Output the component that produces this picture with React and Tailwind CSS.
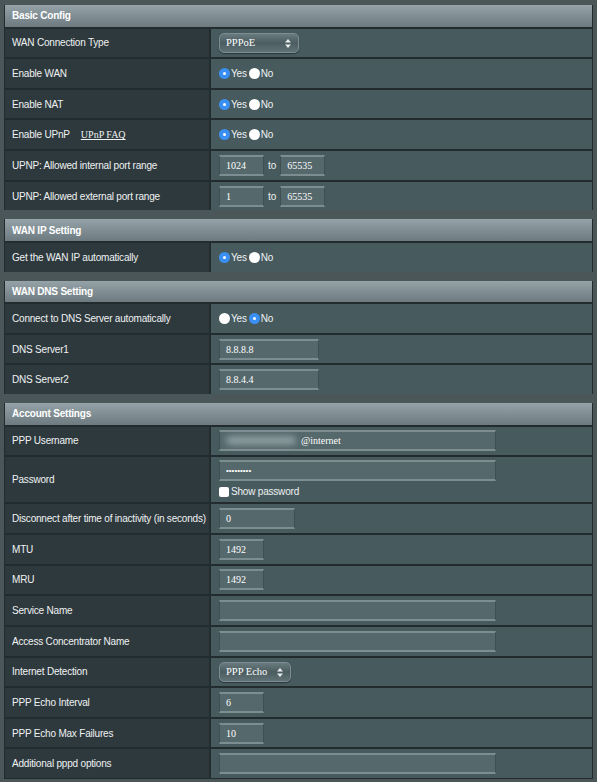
import React from 'react';

const sans = { fontFamily: '"Liberation Sans", Arial, sans-serif' };
const serif = { fontFamily: '"Liberation Serif", "Times New Roman", serif' };

const Radio = ({ checked }) =>
  checked ? (
    <span className="inline-flex w-[11px] h-[11px] rounded-full bg-[#3a8ff2] items-center justify-center">
      <span className="w-[3px] h-[3px] rounded-full bg-white" />
    </span>
  ) : (
    <span className="inline-block w-[11px] h-[11px] rounded-full bg-white" />
  );

const YesNo = ({ yes = true }) => (
  <div className="flex items-center text-[10px] tracking-[-0.2px] text-[#eef2f3]" style={sans}>
    <Radio checked={yes} />
    <span className="ml-[1px] mr-[2px]">Yes</span>
    <Radio checked={!yes} />
    <span className="ml-[1px]">No</span>
  </div>
);

const Select = ({ value, width }) => (
  <div
    className="relative flex items-center h-[20px] rounded-[5px] border border-[#7c8c90] bg-gradient-to-b from-[#6a7b7f] via-[#4c5d61] to-[#617276] shadow-[0_1px_1px_rgba(0,0,0,0.4)] pl-[6px]"
    style={{ width }}
  >
    <span className="text-[10.5px] text-white" style={serif}>{value}</span>
    <svg className="absolute right-[7px] top-[5px]" width="6" height="9" viewBox="0 0 6 9">
      <path d="M3 0 L6 3.5 H0 Z" fill="#e8eef0" />
      <path d="M3 9 L6 5.5 H0 Z" fill="#e8eef0" />
    </svg>
  </div>
);

const Input = ({ value = '', width, children }) => (
  <div
    className="flex items-center h-[21px] bg-[#55686c] border-t-2 border-b-2 border-t-[#7d8e92] border-b-[#7d8e92] border-x border-x-[#3f5054] pl-[6px] text-[10px] text-white"
    style={{ width, ...serif }}
  >
    {children || value}
  </div>
);

const Row = ({ label, children, tall }) => (
  <div className={`flex border-t-2 border-[#222b2e] ${tall ? 'h-[47px]' : 'h-[30.67px]'}`}>
    <div
      className="w-[206px] shrink-0 bg-[#2e393d] border-r-2 border-[#222b2e] flex items-center pl-[7px] text-[10px] tracking-[-0.2px] text-[#eef2f3] whitespace-nowrap"
      style={sans}
    >
      {label}
    </div>
    <div className="flex-1 bg-[#475a5e] flex items-center pl-[8px]">{children}</div>
  </div>
);

const Section = ({ title, children }) => (
  <div className="border-x border-[#222b2e] mx-[4px]">
    <div
      className="h-[21.5px] bg-gradient-to-b from-[#95a3a8] to-[#6d7b80] flex items-center pl-[7px] text-[10px] tracking-[-0.2px] font-bold text-white"
      style={sans}
    >
      {title}
    </div>
    {children}
  </div>
);

export default function App() {
  return (
    <div className="w-[597px] h-[782px] bg-[#4b5659] pt-[5px] flex flex-col gap-[9px] overflow-hidden">
      <Section title="Basic Config">
        <Row label="WAN Connection Type">
          <Select value="PPPoE" width="80px" />
        </Row>
        <Row label="Enable WAN"><YesNo /></Row>
        <Row label="Enable NAT"><YesNo /></Row>
        <Row
          label={
            <span className="flex items-center">
              Enable UPnP
              <span className="ml-[11px] underline text-[10px] tracking-normal" style={serif}>UPnP FAQ</span>
            </span>
          }
        >
          <YesNo />
        </Row>
        <Row label="UPNP: Allowed internal port range">
          <div className="flex items-center">
            <Input value="1024" width="45px" />
            <span className="mx-[4px] text-[10px] text-[#eef2f3]" style={sans}>to</span>
            <Input value="65535" width="45px" />
          </div>
        </Row>
        <Row label="UPNP: Allowed external port range">
          <div className="flex items-center">
            <Input value="1" width="45px" />
            <span className="mx-[4px] text-[10px] text-[#eef2f3]" style={sans}>to</span>
            <Input value="65535" width="45px" />
          </div>
        </Row>
      </Section>

      <Section title="WAN IP Setting">
        <Row label="Get the WAN IP automatically"><YesNo /></Row>
      </Section>

      <Section title="WAN DNS Setting">
        <Row label="Connect to DNS Server automatically"><YesNo yes={false} /></Row>
        <Row label="DNS Server1"><Input value="8.8.8.8" width="100px" /></Row>
        <Row label="DNS Server2"><Input value="8.8.4.4" width="100px" /></Row>
      </Section>

      <Section title="Account Settings">
        <Row label="PPP Username">
          <Input width="277px">
            <span className="w-[70px] h-[9px] bg-[#8c9ca0] blur-[3px] rounded-full mr-[5px]" />
            <span>@internet</span>
          </Input>
        </Row>
        <Row label="Password" tall>
          <div className="flex flex-col">
            <Input width="277px">
              <span className="text-[8px]" style={sans}>•••••••••</span>
            </Input>
            <div className="flex items-center mt-[3px] text-[10px] tracking-[-0.2px] text-[#eef2f3]" style={sans}>
              <span className="w-[10px] h-[10px] rounded-[2px] bg-white mr-[2px]" />
              Show password
            </div>
          </div>
        </Row>
        <Row label="Disconnect after time of inactivity (in seconds)"><Input value="0" width="76px" /></Row>
        <Row label="MTU"><Input value="1492" width="45px" /></Row>
        <Row label="MRU"><Input value="1492" width="45px" /></Row>
        <Row label="Service Name"><Input width="277px" /></Row>
        <Row label="Access Concentrator Name"><Input width="277px" /></Row>
        <Row label="Internet Detection">
          <Select value="PPP Echo" width="72px" />
        </Row>
        <Row label="PPP Echo Interval"><Input value="6" width="45px" /></Row>
        <Row label="PPP Echo Max Failures"><Input value="10" width="45px" /></Row>
        <Row label="Additional pppd options"><Input width="277px" /></Row>
        <div className="h-[1px] bg-[#222b2e]" />
      </Section>
    </div>
  );
}
